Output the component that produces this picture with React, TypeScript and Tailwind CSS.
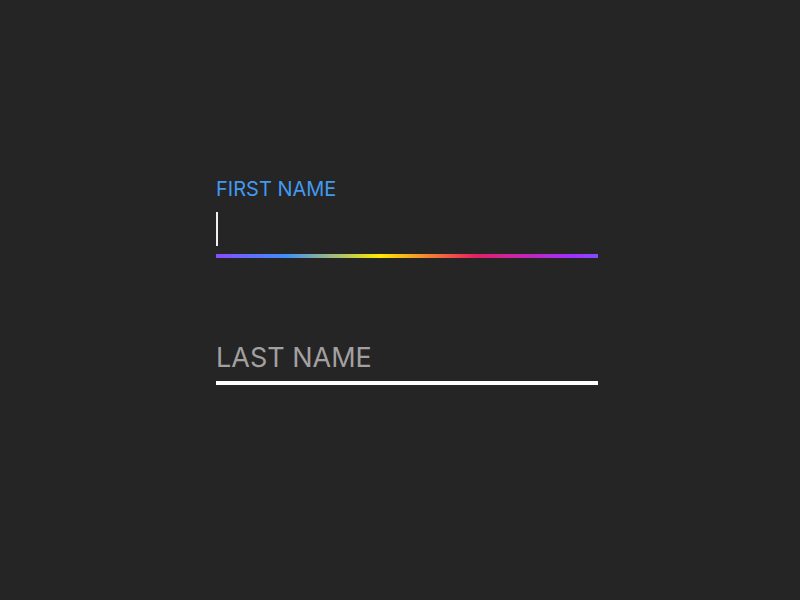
export default function App() {
  return (
    <main className="flex min-h-screen items-center justify-center bg-[#252525] pb-[37px] pl-[14px] font-['Inter',sans-serif]">
      <form className="flex w-full max-w-[382px] flex-col gap-20">
        <div>
          <label htmlFor="first-name" className="block text-[20px] leading-[22px] text-[#4299f0]">
            FIRST NAME
          </label>
          <div className="mt-3 flex h-[34px]">
            <span className="w-[2px] bg-[#f0f0f0]" aria-hidden="true" />
            <input
              id="first-name"
              type="text"
              className="min-w-0 flex-1 bg-transparent text-[27px] text-white caret-transparent outline-none"
            />
          </div>
          <div className="mt-2 h-1 bg-[linear-gradient(90deg,#a033ff_-7%,#3f8ffb_18%,#ffea00_43%,#e91e63_68%,#a030ff_93%,#3f8ffb_118%)]" />
        </div>
        <div className="relative border-b-4 border-white pb-1">
          <input
            id="last-name"
            type="text"
            placeholder=" "
            className="peer absolute inset-0 w-full bg-transparent text-[27px] text-white outline-none"
          />
          <label
            htmlFor="last-name"
            className="invisible block text-[27px] leading-[39px] text-[#a2a0a0] peer-placeholder-shown:visible"
          >
            LAST NAME
          </label>
        </div>
      </form>
    </main>
  );
}
